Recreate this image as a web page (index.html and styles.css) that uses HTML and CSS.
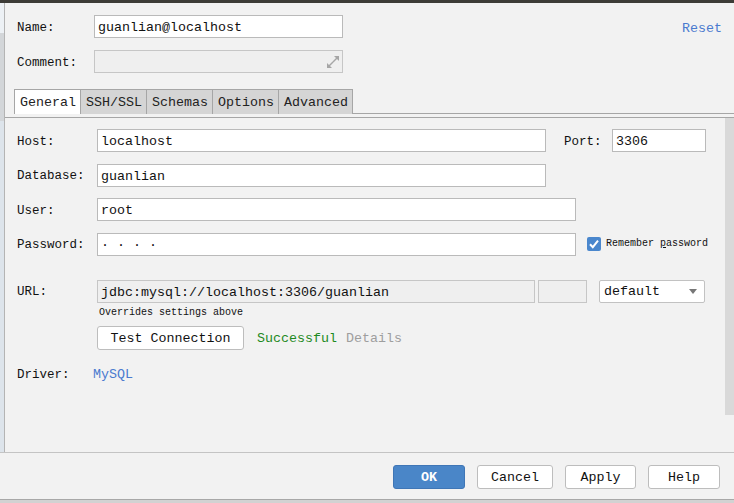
FILE: index.html
```html
<!DOCTYPE html>
<html>
<head>
<meta charset="utf-8">
<link rel="stylesheet" href="styles.css">
</head>
<body>
<div class="titlebar"></div>
<div class="upper">
  <div class="strip"></div>
  <div class="content">
    <div class="header">
      <div class="hrow">
        <span class="hlabel">Name:</span>
        <div class="field f-name">guanlian@localhost</div>
        <a class="reset">Reset</a>
      </div>
      <div class="hrow comment-row">
        <span class="hlabel">Comment:</span>
        <div class="field f-name f-muted comment">
          <svg class="expand" width="14" height="14" viewBox="0 0 14 14">
            <path d="M8 1h5v5z" fill="#a6a6a6"/>
            <path d="M7 7l4-4" stroke="#a6a6a6" stroke-width="1.4"/>
            <path d="M1 8v5h5z" fill="#a6a6a6"/>
            <path d="M7 7l-4 4" stroke="#a6a6a6" stroke-width="1.4"/>
          </svg>
        </div>
      </div>
    </div>
    <div class="tabs">
      <div class="tab active">General</div>
      <div class="tab">SSH/SSL</div>
      <div class="tab">Schemas</div>
      <div class="tab">Options</div>
      <div class="tab">Advanced</div>
    </div>
    <div class="panel">
      <div class="form">
        <div class="group">
          <div class="row">
            <span class="label">Host:</span>
            <div class="field f-host">localhost</div>
            <span class="label port-label">Port:</span>
            <div class="field f-port">3306</div>
          </div>
          <div class="row">
            <span class="label">Database:</span>
            <div class="field f-host">guanlian</div>
          </div>
          <div class="row">
            <span class="label">User:</span>
            <div class="field f-user">root</div>
          </div>
          <div class="row">
            <span class="label">Password:</span>
            <div class="field f-user">· · · ·</div>
            <span class="check">
              <svg width="14" height="14" viewBox="0 0 14 14"><path d="M3 7.2l2.8 3L11 3.6" fill="none" stroke="#fff" stroke-width="2"/></svg>
            </span>
            <span class="small remember">Remember <u>p</u>assword</span>
          </div>
        </div>
        <div class="row url-row">
          <span class="label">URL:</span>
          <div class="field f-url f-muted">jdbc:mysql://localhost:3306/guanlian</div>
          <div class="field f-extra f-muted"></div>
          <div class="select">
            <span>default</span>
            <span class="arrow"></span>
          </div>
        </div>
        <div class="small note">Overrides settings above</div>
        <div class="test-row">
          <div class="btn test-btn">Test Connection</div>
          <span class="ok-text">Successful</span>
          <span class="details">Details</span>
        </div>
        <div class="driver-row">
          <span class="label driver-label">Driver:</span>
          <a class="link">MySQL</a>
        </div>
      </div>
      <div class="scrollbar"></div>
    </div>
  </div>
</div>
<div class="footer">
  <div class="btn primary b-ok">OK</div>
  <div class="btn b-cancel">Cancel</div>
  <div class="btn b-apply">Apply</div>
  <div class="btn b-help">Help</div>
</div>
<div class="bottomedge"></div>
</body>
</html>
```

FILE: styles.css
```css
* { box-sizing: border-box; }
html, body {
  margin: 0;
  padding: 0;
  background: #f2f2f2;
  font-family: "Liberation Mono", "DejaVu Sans Mono", monospace;
  color: #111;
  width: 734px;
  height: 503px;
  overflow: hidden;
}
.titlebar { height: 3px; background: #3d3c37; }
.upper { display: flex; height: 449px; }
.strip {
  width: 5px;
  border-right: 1px solid #b4b4b4;
  background: linear-gradient(to bottom, #edf1f5 0, #edf1f5 30px, #d3d6d9 30px, #d3d6d9 118px, #dde4eb 118px);
}
.content { flex: 1; display: flex; flex-direction: column; }
.header { padding: 12px 12px 0 12px; }
.hrow { display: flex; align-items: center; height: 23px; }
.comment-row { margin-top: 12px; }
.hlabel { width: 77px; font-size: 12.5px; padding-top: 2px; }
.field {
  height: 23px;
  border: 1px solid #bababa;
  background: #fff;
  padding: 1px 3px 0 3px;
  font-size: 13.33px;
  line-height: 21px;
  white-space: nowrap;
  overflow: hidden;
}
.f-muted { background: #efefef; border-color: #c6c6c6; }
.f-name { width: 249px; }
.comment { display: flex; justify-content: flex-end; align-items: center; padding: 0 2px 0 3px; }
.reset { margin-left: auto; font-size: 13.33px; color: #4a7bcf; padding-top: 3px; }
.tabs {
  display: flex;
  margin: 16px 0 0 9px;
  border-bottom: 1px solid #a6a6a6;
  height: 25px;
}
.tab {
  height: 25px;
  padding: 1px 4px 0 5px;
  border: 1px solid #a6a6a6;
  border-left: none;
  border-bottom: none;
  background: #d5d5d5;
  font-size: 13.33px;
  line-height: 23px;
  color: #222;
}
.tab.active { background: #fff; border-left: 1px solid #a6a6a6; }
.panel {
  flex: 1;
  margin-top: 3px;
  border-top: 1px solid #a6a6a6;
  display: flex;
}
.form { flex: 1; padding: 11px 0 0 12px; }
.scrollbar { width: 9px; height: 297px; background: #d9d9d9; }
.group { display: flex; flex-direction: column; gap: 11.67px; }
.row { display: flex; align-items: center; height: 23px; }
.label { width: 80px; font-size: 12.5px; padding-top: 2px; }
.f-host { width: 449px; }
.f-port { width: 94px; }
.f-user { width: 479px; }
.f-url { width: 438px; }
.f-extra { width: 49px; margin-left: 3px; }
.port-label { width: 48px; margin-left: 18px; }
.check {
  width: 14px; height: 14px;
  margin-left: 11px;
  background: #4a87cd;
  border-radius: 2px;
  display: flex;
}
.small { font-size: 10px; line-height: 12px; }
.remember { margin-left: 5px; }
.url-row { margin-top: 24px; }
.select {
  width: 106px;
  height: 23px;
  margin-left: 12px;
  border: 1px solid #c2c2c2;
  border-radius: 2px;
  background: #fff;
  display: flex;
  align-items: center;
  justify-content: space-between;
  padding: 1px 7px 0 4px;
  font-size: 13.33px;
}
.arrow {
  width: 0; height: 0;
  border-left: 4px solid transparent;
  border-right: 4px solid transparent;
  border-top: 5px solid #777;
}
.note { margin: 4px 0 0 82px; }
.test-row { display: flex; align-items: center; margin: 7px 0 0 80px; }
.btn {
  height: 24px;
  border: 1px solid #bdbdbd;
  border-radius: 3px;
  background: #fff;
  font-size: 13.33px;
  display: flex;
  align-items: center;
  justify-content: center;
  padding-top: 1px;
  color: #111;
}
.test-btn { width: 147px; }
.ok-text { margin-left: 13px; font-size: 13.33px; color: #1e8a1e; padding-top: 1px; }
.details { margin-left: 9px; font-size: 13.33px; color: #9e9e9e; padding-top: 1px; }
.driver-row { display: flex; align-items: center; height: 16px; margin-top: 16px; }
.driver-label { width: 76px; }
.link { font-size: 13.33px; color: #4a7bcf; padding-top: 1px; }
.footer {
  height: 48px;
  border-top: 1px solid #c4c4c4;
  border-bottom: 1px solid #a8a8a8;
  display: flex;
  justify-content: flex-end;
  gap: 12px;
  padding: 12px 14px 0 0;
}
.b-ok { width: 72px; }
.b-cancel { width: 76px; }
.b-apply { width: 71px; }
.b-help { width: 72px; }
.primary {
  background: #4a86c8;
  border-color: #3f76b6;
  color: #fff;
  font-weight: bold;
}
.bottomedge { height: 3px; background: #d2d2d2; }
```
